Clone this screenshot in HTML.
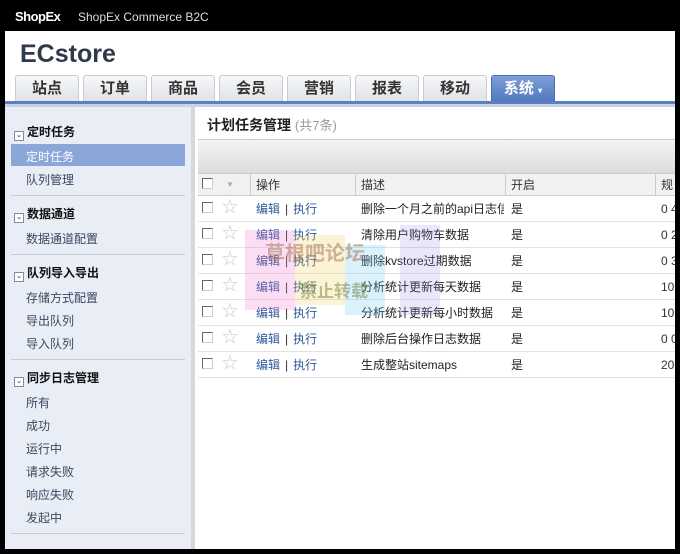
<!DOCTYPE html>
<html><head><meta charset="utf-8"><style>
*{margin:0;padding:0;box-sizing:border-box}
body{width:680px;height:554px;background:#000;position:relative;overflow:hidden;font-family:"Liberation Sans","Noto Sans CJK SC",sans-serif;font-size:12px;color:#333}
.abs{position:absolute;white-space:nowrap}
.tab{position:absolute;top:75px;width:64px;height:27px;border:1px solid #c9ccd0;border-bottom:none;border-radius:3px 3px 0 0;background:linear-gradient(#f6f7f8,#dfe2e6);text-align:center;font-size:15px;font-weight:bold;color:#333;line-height:26px}
.side{position:absolute;left:26px;font-size:12px;color:#3c4660;white-space:nowrap}
.sh{position:absolute;left:14px;font-size:12px;font-weight:bold;color:#111;white-space:nowrap}
.sh i{display:inline-block;width:10px;height:10px;border:1px solid #889;background:#fff;margin-right:3px;vertical-align:-1px;font-style:normal;font-size:7px;line-height:8px;text-align:center;color:#667}
.sep{position:absolute;left:11px;width:174px;height:1px;background:#c5ccd8}
.row{position:absolute;left:198px;width:477px;height:26px;border-bottom:1px solid #e2e2e2;line-height:26px;font-size:12px;white-space:nowrap;overflow:hidden}
.row span{white-space:nowrap}
.cb{position:absolute;left:4px;top:6px;width:11px;height:11px;border:1px solid #666;border-right-color:#ccc;border-bottom-color:#ccc;background:#fff}
.st{position:absolute;left:24px;top:-1px;color:#ccc;font-size:16px}
.op{position:absolute;left:58px;color:#2c5a9c}
.op b{font-weight:normal;color:#333;margin:0 5px}
.d{position:absolute;left:163px;width:143px;overflow:hidden;color:#222}
.y{position:absolute;left:313px;color:#222}
.n{position:absolute;left:463px;color:#333}
</style></head><body>
<div class="abs" style="left:15px;top:9px;color:#fff;font-weight:bold;font-size:13px;letter-spacing:-0.5px">ShopEx</div>
<div class="abs" style="left:78px;top:10px;color:#ddd;font-size:12px">ShopEx Commerce B2C</div>
<div class="abs" style="left:5px;top:31px;width:670px;height:518px;background:#fff"></div>
<div class="abs" style="left:20px;top:40px;font-size:25px;font-weight:bold;color:#2e3a4a">ECstore</div>
<div class="tab" style="left:15px">站点</div>
<div class="tab" style="left:83px">订单</div>
<div class="tab" style="left:151px">商品</div>
<div class="tab" style="left:219px">会员</div>
<div class="tab" style="left:287px">营销</div>
<div class="tab" style="left:355px">报表</div>
<div class="tab" style="left:423px">移动</div>
<div class="tab" style="left:491px;border-color:#4a6fb0;background:linear-gradient(#7f9fd6,#4f78c0);color:#fff">系统 <span style="font-size:8px">▾</span></div>
<div class="abs" style="left:5px;top:101px;width:670px;height:3px;background:#5b7fbf"></div>
<div class="abs" style="left:5px;top:104px;width:670px;height:3px;background:#c8d3e6"></div>
<div class="abs" style="left:5px;top:107px;width:186px;height:442px;background:#e9edf5"></div>
<div class="abs" style="left:191px;top:107px;width:4px;height:442px;background:#d5d9df"></div>
<div class="sh" style="top:123px"><i>⌄</i>定时任务</div>
<div class="abs" style="left:11px;top:144px;width:174px;height:22px;background:#8ba6d8"></div>
<div class="side" style="top:148px;color:#fff">定时任务</div>
<div class="side" style="top:171px">队列管理</div>
<div class="sep" style="top:195px"></div>
<div class="sh" style="top:205px"><i>⌄</i>数据通道</div>
<div class="side" style="top:230px">数据通道配置</div>
<div class="sep" style="top:254px"></div>
<div class="sh" style="top:264px"><i>⌄</i>队列导入导出</div>
<div class="side" style="top:289px">存储方式配置</div>
<div class="side" style="top:312px">导出队列</div>
<div class="side" style="top:335px">导入队列</div>
<div class="sep" style="top:359px"></div>
<div class="sh" style="top:369px"><i>⌄</i>同步日志管理</div>
<div class="side" style="top:394px">所有</div>
<div class="side" style="top:417px">成功</div>
<div class="side" style="top:440px">运行中</div>
<div class="side" style="top:463px">请求失败</div>
<div class="side" style="top:486px">响应失败</div>
<div class="side" style="top:509px">发起中</div>
<div class="sep" style="top:533px"></div>
<div class="abs" style="left:207px;top:115px;font-size:14px;font-weight:bold;color:#222">计划任务管理 <span style="font-weight:normal;font-size:13px;color:#999">(共7条)</span></div>
<div class="abs" style="left:198px;top:139px;width:477px;height:35px;border-top:1px solid #ccc;background:linear-gradient(#f4f4f4,#dcdcdc)"></div>
<div class="row" style="top:173px;height:23px;line-height:22px;background:#f1f1f1;border-top:1px solid #ccc;border-bottom:1px solid #ccc">
<div class="cb" style="top:4px"></div><span class="abs" style="left:28px;color:#aaa;font-size:8px">▼</span>
<div class="abs" style="left:52px;top:0;height:22px;border-left:1px solid #ccc"></div><span class="abs" style="left:58px">操作</span>
<div class="abs" style="left:157px;top:0;height:22px;border-left:1px solid #ccc"></div><span class="abs" style="left:163px">描述</span>
<div class="abs" style="left:307px;top:0;height:22px;border-left:1px solid #ccc"></div><span class="abs" style="left:313px">开启</span>
<div class="abs" style="left:457px;top:0;height:22px;border-left:1px solid #ccc"></div><span class="abs" style="left:463px">规</span>
</div>
<div class="row" style="top:196px"><div class="cb"></div><span class="st">☆</span><span class="op">编辑<b>|</b>执行</span><span class="d">删除一个月之前的api日志信息</span><span class="y">是</span><span class="n">0 4</span></div>
<div class="row" style="top:222px"><div class="cb"></div><span class="st">☆</span><span class="op">编辑<b>|</b>执行</span><span class="d">清除用户购物车数据</span><span class="y">是</span><span class="n">0 2</span></div>
<div class="row" style="top:248px"><div class="cb"></div><span class="st">☆</span><span class="op">编辑<b>|</b>执行</span><span class="d">删除kvstore过期数据</span><span class="y">是</span><span class="n">0 3</span></div>
<div class="row" style="top:274px"><div class="cb"></div><span class="st">☆</span><span class="op">编辑<b>|</b>执行</span><span class="d">分析统计更新每天数据</span><span class="y">是</span><span class="n">10</span></div>
<div class="row" style="top:300px"><div class="cb"></div><span class="st">☆</span><span class="op">编辑<b>|</b>执行</span><span class="d">分析统计更新每小时数据</span><span class="y">是</span><span class="n">10</span></div>
<div class="row" style="top:326px"><div class="cb"></div><span class="st">☆</span><span class="op">编辑<b>|</b>执行</span><span class="d">删除后台操作日志数据</span><span class="y">是</span><span class="n">0 0</span></div>
<div class="row" style="top:352px"><div class="cb"></div><span class="st">☆</span><span class="op">编辑<b>|</b>执行</span><span class="d">生成整站sitemaps</span><span class="y">是</span><span class="n">20</span></div>
<div class="abs" style="left:245px;top:230px;width:50px;height:80px;background:#f07ad0;opacity:.25"></div>
<div class="abs" style="left:295px;top:235px;width:50px;height:70px;background:#f4d060;opacity:.25"></div>
<div class="abs" style="left:345px;top:245px;width:40px;height:70px;background:#70c8f0;opacity:.25"></div>
<div class="abs" style="left:400px;top:225px;width:40px;height:90px;background:#a080e0;opacity:.2"></div>
<div class="abs" style="left:265px;top:237px;font-size:20px;font-weight:bold;color:rgba(150,100,60,.45)">草根吧论坛</div>
<div class="abs" style="left:300px;top:277px;font-size:17px;font-weight:bold;color:rgba(100,120,40,.45)">禁止转载</div>
<div class="abs" style="left:675px;top:0;width:5px;height:554px;background:#000"></div>
</body></html>
